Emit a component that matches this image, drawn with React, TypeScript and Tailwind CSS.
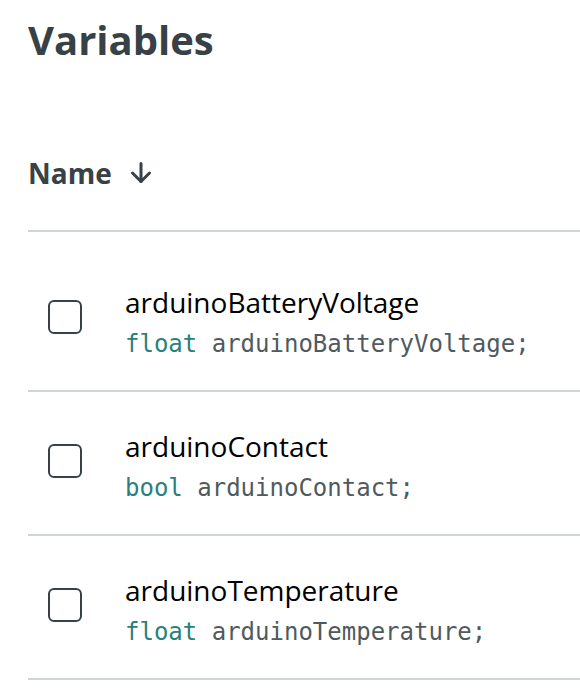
import React from "react";

const rows = [
  { name: "arduinoBatteryVoltage", type: "float" },
  { name: "arduinoContact", type: "bool" },
  { name: "arduinoTemperature", type: "float" },
];

export default function App() {
  return (
    <div className="w-[580px] h-[696px] bg-white overflow-hidden pl-[28px]" style={{ fontFamily: '"Open Sans", sans-serif' }}>
      <h1 className="text-[40px] font-bold text-[#374146] leading-[48px] pt-[16px]">Variables</h1>
      <div className="flex items-center gap-[17px] mt-[86px] h-[46px] text-[#374146]">
        <span className="text-[28px] font-bold">Name</span>
        <svg width="24" height="24" viewBox="0 0 24 24" fill="none" stroke="#374146" strokeWidth="3" strokeLinecap="round" strokeLinejoin="round">
          <path d="M12 2.5v18" />
          <path d="M3.5 12l8.5 8.5 8.5-8.5" />
        </svg>
      </div>
      <div className="mt-[34px] border-t-2 border-[#cfd5d5]">
        {rows.map((r, i) => (
          <div key={r.name} className={`flex items-start border-b-2 border-[#cfd5d5] pb-[25px] ${i === 0 ? "pt-[49px]" : "pt-[33px]"}`}>
            <div className="w-[34px] h-[34px] ml-[20px] mt-[19px] border-2 border-[#374146] rounded-[6px] shrink-0" />
            <div className="ml-[43px] flex flex-col">
              <span className="text-[28px] text-black leading-[42px]">{r.name}</span>
              <span className="text-[24px] leading-[42px] text-[#4f5a60]" style={{ fontFamily: '"DejaVu Sans Mono", monospace' }}>
                <span className="text-[#2a7f80]">{r.type}</span> {r.name};
              </span>
            </div>
          </div>
        ))}
      </div>
    </div>
  );
}
